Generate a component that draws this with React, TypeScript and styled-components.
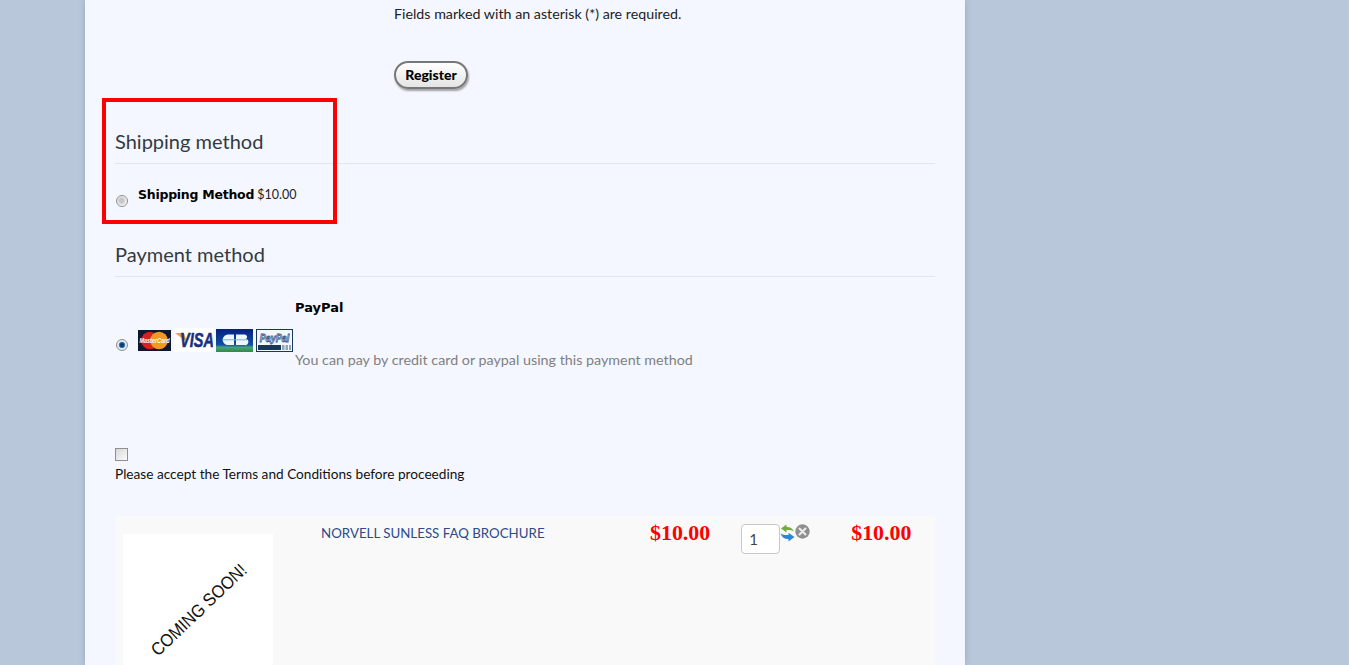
import React from "react";
import styled, { createGlobalStyle } from "styled-components";

const Global = createGlobalStyle`
  html, body { margin: 0; padding: 0; height: 665px; overflow: hidden; background: #b8c8da; }
  body { font-family: Lato, "Noto Sans", sans-serif; font-size: 14px; color: #111; }
`;

const Page = styled.main`
  width: 880px;
  height: 665px;
  margin-left: 85px;
  padding: 0 30px;
  box-sizing: border-box;
  background: #f4f7ff;
  box-shadow: 0 0 6px rgba(90, 100, 120, 0.35);
  overflow: hidden;
`;

const RegisterForm = styled.div`
  padding: 4px 0 0 279px;
  height: 98px;
  box-sizing: border-box;
`;

const Note = styled.p`
  margin: 0;
  font-size: 14.25px;
  line-height: 19px;
  color: #222;
`;

const RegisterButton = styled.button`
  display: block;
  margin-top: 38px;
  width: 74px;
  height: 28px;
  padding: 0 0 2px;
  border: 2px solid #777;
  border-radius: 14px;
  background: linear-gradient(#fff, #e4e4e4);
  box-shadow: 1px 2px 2px rgba(0, 0, 0, 0.35);
  font-family: Lato, sans-serif;
  font-size: 14px;
  font-weight: 900;
  color: #000;
`;

const ShippingSection = styled.section`
  position: relative;
  height: 126px;
  padding-top: 30px;
  box-sizing: border-box;
`;

const Highlight = styled.div`
  position: absolute;
  left: -13px;
  top: 0;
  width: 235px;
  height: 126px;
  box-sizing: border-box;
  border: 4px solid #f00;
  pointer-events: none;
`;

const Heading = styled.h2`
  margin: 0;
  height: 35px;
  border-bottom: 1px solid #e1e5ec;
  font-size: 20px;
  font-weight: 400;
  line-height: 26px;
  color: #333a42;
`;

const ShippingRow = styled.div`
  display: flex;
  align-items: flex-start;
  padding: 22px 0 0 1px;
`;

const RadioMark = styled.span<{ $checked?: boolean }>`
  flex: none;
  display: block;
  width: 12px;
  height: 12px;
  margin-top: ${(p) => (p.$checked ? 0 : 9)}px;
  border-radius: 50%;
  box-sizing: border-box;
  border: 1px solid #8b8f94;
  background: ${(p) =>
    p.$checked
      ? "radial-gradient(circle, #0d3b66 0 1.5px, #3f95cf 3px, #e4eaf0 3.6px)"
      : "radial-gradient(circle at 45% 45%, #c6c6c6 0 2px, #dcdcdc 3.5px, #f4f4f4 5px)"};
`;

const MethodName = styled.strong<{ $tight?: boolean }>`
  font-family: "DejaVu Sans", sans-serif;
  font-size: ${(p) => (p.$tight ? 12.5 : 13)}px;
  letter-spacing: ${(p) => (p.$tight ? -0.25 : 0)}px;
  font-weight: 700;
  color: #000;
`;

const ShippingLabel = styled.div`
  margin-left: 10px;
  font-size: 12.5px;
  line-height: 18px;
  color: #222;
`;

const PaymentSection = styled.section`
  height: 100px;
  padding-top: 17px;
`;

const PaymentRow = styled.div`
  display: flex;
  padding: 23px 0 0 1px;
  height: 80px;
`;

const PaymentRadioSlot = styled.div`
  padding-top: 39px;
`;

const Logos = styled.div`
  display: flex;
  align-items: center;
  gap: 3px;
  margin: 28px 2px 0 10px;
  height: 24px;
`;

const PaymentText = styled.div`
  display: flex;
  flex-direction: column;
`;

const PaymentHint = styled.p`
  margin: 35px 0 0;
  font-size: 14.3px;
  line-height: 20px;
  color: #808080;
`;

const Terms = styled.div`
  padding-top: 107px;
`;

const TermsBox = styled.span`
  display: block;
  width: 13px;
  height: 13px;
  box-sizing: border-box;
  border: 1px solid #8f8f8f;
  background: linear-gradient(135deg, #d8d8d8, #fbfbfb);
`;

const TermsText = styled.p`
  margin: 3px 0 0;
  font-size: 13.65px;
  line-height: 20px;
  color: #111;
`;

const CartRow = styled.div`
  display: flex;
  align-items: flex-start;
  height: 200px;
  margin-top: 32px;
  background: #f9f9f9;
`;

const ProductImage = styled.div`
  flex: none;
  width: 150px;
  height: 150px;
  margin: 18px 0 0 8px;
  background: #fff;
`;

const ProductName = styled.a`
  flex: none;
  width: 329px;
  margin: 7px 0 0 48px;
  font-size: 13.3px;
  line-height: 20px;
  color: #2d4a8a;
`;

const Price = styled.span`
  flex: none;
  margin-top: 5px;
  font-family: "Liberation Serif", serif;
  font-size: 21.9px;
  font-weight: 700;
  line-height: 24px;
  color: #f00;
`;

const QtyCell = styled.div`
  flex: none;
  display: flex;
  align-items: flex-start;
  margin: 8px 0 0 31px;
  width: 110px;
`;

const QtyInput = styled.span`
  display: block;
  width: 39px;
  height: 30px;
  box-sizing: border-box;
  padding-left: 7px;
  border: 1px solid #c8c8c8;
  border-radius: 4px;
  background: #fff;
  font-size: 15px;
  line-height: 29px;
  color: #444;
`;

const IconSlot = styled.span`
  display: block;
  line-height: 0;
`;

const Mastercard = () => (
  <svg width="33" height="21" viewBox="0 0 33 21">
    <rect width="33" height="21" fill="#10182e" />
    <circle cx="12" cy="10.500" r="8.800" fill="#d9201c" />
    <circle cx="21" cy="10.500" r="8.800" fill="#f39a1e" />
    <text transform="translate(16.500 13) scale(1 1.300)" textAnchor="middle" fontFamily="Liberation Sans" fontSize="5.500" fontWeight="700" fontStyle="italic" fill="#fff">MasterCard</text>
  </svg>
);

const Visa = () => (
  <svg width="39" height="24" viewBox="0 0 39 24">
    <rect width="39" height="24" fill="#fff" />
    <path d="M1 5h9l3 9z" fill="#e8a33a" />
    <text transform="translate(23 19) scale(1 1.350)" textAnchor="middle" fontFamily="Liberation Sans" fontSize="14.500" fontWeight="700" fontStyle="italic" fill="#1a2f80" stroke="#1a2f80" strokeWidth="0.400">VISA</text>
  </svg>
);

const CB = () => (
  <svg width="37" height="23" viewBox="0 0 37 23">
    <defs>
      <linearGradient id="cbg" x1="0" y1="0" x2="0" y2="1">
        <stop offset="0" stopColor="#07207e" />
        <stop offset="0.68" stopColor="#0f4fa5" />
        <stop offset="0.8" stopColor="#4aa27a" />
        <stop offset="1" stopColor="#2d8a45" />
      </linearGradient>
    </defs>
    <rect width="37" height="23" fill="url(#cbg)" />
    <path d="M18 5.500h-6a5 5 0 0 0 0 10.500h6zM20 5.500h8a2.500 2.500 0 0 1 2 4.500 2.800 2.800 0 0 1-1.500 6H20z" fill="#eef6fb" />
    <rect x="6" y="10.300" width="25" height="1" fill="#7fb0d8" />
  </svg>
);

const PayPal = () => (
  <svg width="37" height="23" viewBox="0 0 37 23">
    <rect x="0.500" y="0.500" width="36" height="22" fill="#f4f7fb" stroke="#17375e" />
    <text transform="translate(18.500 12.500) scale(1 1.200)" textAnchor="middle" fontFamily="Liberation Sans" fontSize="9" fontWeight="700" fontStyle="italic" fill="#dfe8f2" stroke="#3a5a8c" strokeWidth="0.700">PayPal</text>
    <rect x="2" y="16" width="23" height="5" fill="#17375e" />
    <rect x="26" y="16" width="2.500" height="5" fill="#8fa5bd" />
    <rect x="29.500" y="16" width="2.500" height="5" fill="#8fa5bd" />
    <rect x="33" y="16" width="2" height="5" fill="#8fa5bd" />
  </svg>
);

const ComingSoon = () => (
  <svg width="150" height="150" viewBox="0 0 150 150">
    <text transform="translate(35 123) rotate(-43.500)" fontFamily="Liberation Sans" fontSize="18" fill="#111" textLength="124" lengthAdjust="spacingAndGlyphs">COMING SOON!</text>
  </svg>
);

const RefreshIcon = () => (
  <svg width="15" height="18" viewBox="0 0 15 18">
    <path d="M1 4.500L6.500 0.500V3C9.500 2.800 12.500 4 14 7.500 11.500 6 9 5.700 6.500 6V8.500z" fill="#6fae3a" />
    <path d="M14.500 13L8.500 17.500V15C5 15.300 2 13.500 0.500 9.500 3 11 5.500 11.300 8.500 11V8.800z" fill="#2f86d6" />
  </svg>
);

const RemoveIcon = () => (
  <svg width="15" height="15" viewBox="0 0 15 15">
    <circle cx="7.500" cy="7.500" r="7.200" fill="#8f8f8f" />
    <path d="M4.500 4.500l6 6M10.500 4.500l-6 6" stroke="#eee" strokeWidth="2" strokeLinecap="round" />
  </svg>
);

export default function App() {
  return (
    <>
      <Global />
      <Page>
        <RegisterForm>
          <Note>Fields marked with an asterisk (*) are required.</Note>
          <RegisterButton>Register</RegisterButton>
        </RegisterForm>

        <ShippingSection>
          <Highlight />
          <Heading>Shipping method</Heading>
          <ShippingRow>
            <RadioMark />
            <ShippingLabel>
              <MethodName $tight>Shipping Method</MethodName> $10.00
            </ShippingLabel>
          </ShippingRow>
        </ShippingSection>

        <PaymentSection>
          <Heading>Payment method</Heading>
          <PaymentRow>
            <PaymentRadioSlot>
              <RadioMark $checked />
            </PaymentRadioSlot>
            <Logos>
              <Mastercard />
              <Visa />
              <CB />
              <PayPal />
            </Logos>
            <PaymentText>
              <MethodName>PayPal</MethodName>
              <PaymentHint>You can pay by credit card or paypal using this payment method</PaymentHint>
            </PaymentText>
          </PaymentRow>
        </PaymentSection>

        <Terms>
          <TermsBox />
          <TermsText>Please accept the Terms and Conditions before proceeding</TermsText>
        </Terms>

        <CartRow>
          <ProductImage>
            <ComingSoon />
          </ProductImage>
          <ProductName>NORVELL SUNLESS FAQ BROCHURE</ProductName>
          <Price>$10.00</Price>
          <QtyCell>
            <QtyInput>1</QtyInput>
            <IconSlot><RefreshIcon /></IconSlot>
            <IconSlot><RemoveIcon /></IconSlot>
          </QtyCell>
          <Price>$10.00</Price>
        </CartRow>
      </Page>
    </>
  );
}
